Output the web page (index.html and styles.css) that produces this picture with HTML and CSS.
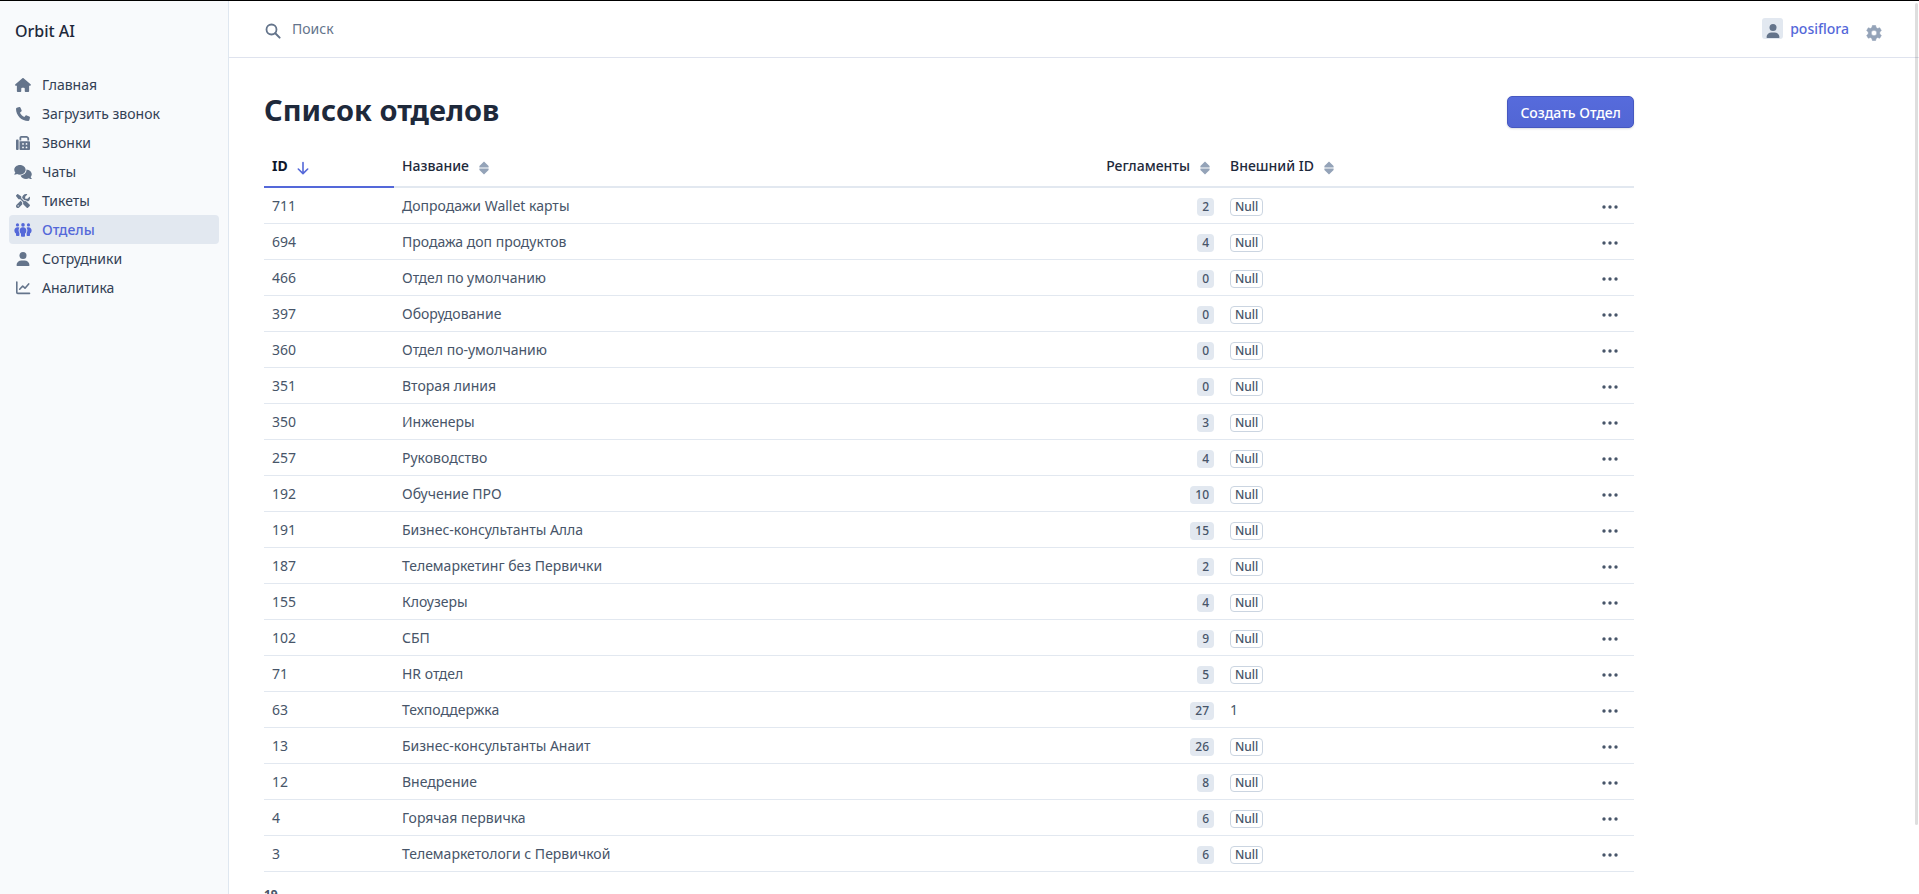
FILE: index.html
```html
<!DOCTYPE html>
<html lang="ru">
<head>
  <meta charset="UTF-8">
  <meta name="viewport" content="width=device-width, initial-scale=1.0">
  <title>Список отделов</title>
  <link rel="stylesheet" href="styles.css">
</head>
<body>
  <!-- icons -->
  <svg class="sprite" aria-hidden="true">
    <symbol id="i-house" viewBox="0 0 576 512">
      <path d="M575.800 255.500c0 18-15 32.100-32 32.100h-32l.7 160.200c0 2.700-.2 5.400-.5 8.100V472c0 22.100-17.900 40-40 40H392c-22.100 0-40-17.900-40-40v-88c0-17.700-14.300-32-32-32h-64c-17.700 0-32 14.300-32 32v88c0 22.100-17.900 40-40 40h-80c-22.100 0-40-17.900-40-40V287.600H32c-18 0-32-14-32-32.100 0-9 3-17 10-24L266.400 8c7-7 15-8 22-8s15 2 21 7l255.400 224.500c8 7 12 15 11 24"/>
    </symbol>
    <symbol id="i-phone" viewBox="0 0 512 512">
      <path d="M164.900 24.600c-7.700-18.600-28-28.500-47.400-23.200l-88 24C12.100 30.200 0 46 0 64c0 247.400 200.600 448 448 448 18 0 33.800-12.100 38.600-29.500l24-88c5.300-19.400-4.600-39.700-23.200-47.400l-96-40c-16.300-6.800-35.200-2.100-46.300 11.600L304.700 368C234.300 334.700 177.300 277.700 144 207.300l49.300-40.300c13.700-11.200 18.400-30 11.600-46.300z"/>
    </symbol>
    <symbol id="i-fax" viewBox="0 0 512 512">
      <path d="M128 64v96h64V64h194.700L416 93.300V160h64V93.300c0-17-6.700-33.300-18.700-45.300L432 18.700C420 6.700 403.700 0 386.700 0H192c-35.300 0-64 28.700-64 64M0 160v320c0 17.700 14.300 32 32 32h32c17.700 0 32-14.300 32-32V160c0-17.700-14.300-32-32-32H32c-17.700 0-32 14.300-32 32m480 32H128v288c0 17.700 14.300 32 32 32h320c17.700 0 32-14.300 32-32V224c0-17.700-14.300-32-32-32M256 256a32 32 0 1 1 0 64 32 32 0 1 1 0-64m96 32a32 32 0 1 1 64 0 32 32 0 1 1-64 0m32 96a32 32 0 1 1 0 64 32 32 0 1 1 0-64m-160 32a32 32 0 1 1 64 0 32 32 0 1 1-64 0"/>
    </symbol>
    <symbol id="i-chat" viewBox="0 0 640 512">
      <path d="M208 352c114.900 0 208-78.800 208-176S322.900 0 208 0 0 78.800 0 176c0 38.600 14.700 74.300 39.600 103.400-3.500 9.400-8.700 17.700-14.200 24.700-4.800 6.200-9.700 11-13.300 14.300-5.500 4.300-8.700 6.300-8.700 6.300C.5 327-1 334.400 1.200 340.800S9.200 352 16 352c21.800 0 43.800-5.600 62.100-12.500 9.200-3.500 17.800-7.400 25.300-11.400C134.100 343.300 169.800 352 208 352m240-176c0 112.300-99.100 196.900-216.500 207C255.800 457.400 336.400 512 432 512c38.200 0 73.900-8.700 104.700-23.900 7.500 4 16 7.900 25.200 11.400 18.300 6.900 40.300 12.500 62.100 12.500 6.900 0 13.100-4.500 15.200-11.100 2.100-6.600-.2-13.800-5.800-17.900 0 0-4-2.900-8.100-6.500-3.600-3.300-8.500-8.100-13.300-14.300-5.500-7-10.700-15.400-14.200-24.700C622.500 410.500 640 374.700 640 336c0-92.800-84.900-168.900-192.600-175.500.4 5.100.6 10.300.6 15.500"/>
    </symbol>
    <symbol id="i-tools" viewBox="0 0 512 512">
      <path d="M78.600 5C69.100-2.400 55.600-1.500 47 7L7 47c-8.500 8.500-9.400 22-2.100 31.600l80 104c4.500 5.900 11.600 9.400 19 9.400h54.100l109 109c-14.700 29-10 65.400 14.300 89.600l112 112c12.500 12.500 32.800 12.500 45.300 0l64-64c12.500-12.500 12.500-32.800 0-45.300l-112-112c-24.200-24.200-60.600-29-89.600-14.300l-109-109V104c0-7.500-3.500-14.500-9.400-19zM19.900 396.100C7.200 408.800 0 426.100 0 444.100 0 481.600 30.400 512 67.900 512c18 0 35.300-7.200 48-19.900l117.800-117.800c-7.800-20.900-9-43.600-3.600-65.100l-61.700-61.700zM512 144c0-10.500-1.100-20.700-3.200-30.500-2.400-11.200-16.100-14.100-24.200-6l-63.900 63.900c-3 3-7.100 4.700-11.300 4.700H352c-8.800 0-16-7.200-16-16v-57.500c0-4.200 1.700-8.300 4.700-11.300l63.900-63.900c8.100-8.100 5.200-21.800-6-24.200C388.700 1.100 378.500 0 368 0c-79.500 0-144 64.500-144 144v.8l85.300 85.300c36-9.100 75.800.5 104 28.700l15.700 15.700c49-23 83-72.800 83-130.500M56 432a24 24 0 1 1 48 0 24 24 0 1 1-48 0"/>
    </symbol>
    <symbol id="i-group" viewBox="0 0 18 14">
      <circle cx="3.500" cy="1.900" r="1.600"/><circle cx="9" cy="1.900" r="1.800"/><circle cx="14.500" cy="1.900" r="1.600"/>
      <path d="M3 4.200h1.400l1 .5a5 5 0 0 0 0 5.300v2.200a.8.8 0 0 1-.8.800H2.800a.8.8 0 0 1-.8-.8V10.500C-.4 9-.2 5 3 4.200M15 4.200h-1.400l-1 .5a5 5 0 0 1 0 5.300v2.200a.8.8 0 0 0 .8.800h1.800a.8.8 0 0 0 .8-.8V10.500C18.400 9 18.200 5 15 4.200M8.200 4.300h1.600c3 .8 3.300 4.800 1.200 6.400V13a.8.8 0 0 1-.8.800H7.800A.8.8 0 0 1 7 13v-2.300C4.900 9.100 5.200 5.100 8.200 4.300"/>
    </symbol>
    <symbol id="i-person" viewBox="0 0 16 16">
      <circle cx="8" cy="4.500" r="3.500"/><path d="M6.500 9.500h3a5 5 0 0 1 5 4.700.8.8 0 0 1-.8.800H2.300a.8.8 0 0 1-.8-.8 5 5 0 0 1 5-4.700"/>
    </symbol>
    <symbol id="i-chart" viewBox="0 0 16 16">
      <path d="M1.800 2v10.400a1 1 0 0 0 1 1h11.700M4.700 9.200l3-3.200 2.300 2.200 3.700-4.300" fill="none" stroke="currentColor" stroke-width="1.600" stroke-linecap="round" stroke-linejoin="round"/>
    </symbol>
    <symbol id="i-search" viewBox="0 0 16 16">
      <circle cx="6.500" cy="6.500" r="5" fill="none" stroke="currentColor" stroke-width="1.800"/><path d="m10.300 10.300 4.300 4.300" stroke="currentColor" stroke-width="2" stroke-linecap="round"/>
    </symbol>
    <symbol id="i-gear" viewBox="0.5 0 15 16">
      <path fill-rule="evenodd" stroke="currentColor" stroke-width=".6" stroke-linejoin="round" d="M6.400.5h3.200l.5 2.100 1.500.9 2.100-.7 1.600 2.800-1.600 1.400v2l1.600 1.400-1.600 2.800-2.100-.7-1.500.9-.5 2.100H6.400l-.5-2.100-1.500-.9-2.100.7-1.600-2.800L2.300 9V7L.7 5.600l1.600-2.800 2.100.7 1.500-.9zM8 5.200a2.800 2.800 0 1 0 0 5.600 2.800 2.800 0 0 0 0-5.600"/>
    </symbol>
    <symbol id="i-down" viewBox="0 0 12 14">
      <path d="M6 1.500v11M1.300 8 6 12.600 10.700 8" fill="none" stroke="currentColor" stroke-width="1.600" stroke-linecap="round" stroke-linejoin="round"/>
    </symbol>
    <symbol id="i-sort" viewBox="0 0 10 14">
      <path d="M5 .6 9.600 5v1.400H.4V5zM5 13.400.4 9V7.600h9.200V9z"/>
    </symbol>
    <symbol id="i-dots" viewBox="0 0 16 16">
      <circle cx="2" cy="8" r="1.700"/><circle cx="8" cy="8" r="1.700"/><circle cx="14" cy="8" r="1.700"/>
    </symbol>
  </svg>

  <div class="layout">
    <aside class="sidebar">
      <a class="brand" href="#">Orbit AI</a>
      <nav class="menu">
        <a href="#"><svg class="small"><use href="#i-house"/></svg>Главная</a>
        <a href="#"><svg class="small"><use href="#i-phone"/></svg>Загрузить звонок</a>
        <a href="#"><svg class="small"><use href="#i-fax"/></svg>Звонки</a>
        <a href="#"><svg class="wide"><use href="#i-chat"/></svg>Чаты</a>
        <a href="#"><svg class="small"><use href="#i-tools"/></svg>Тикеты</a>
        <a href="#" class="active"><svg class="wide"><use href="#i-group"/></svg>Отделы</a>
        <a href="#"><svg><use href="#i-person"/></svg>Сотрудники</a>
        <a href="#"><svg><use href="#i-chart"/></svg>Аналитика</a>
      </nav>
    </aside>

    <div class="main">
      <header class="topbar">
        <label class="search">
          <svg><use href="#i-search"/></svg>
          <input type="search" placeholder="Поиск" aria-label="Поиск">
        </label>
        <a class="user" href="#"><span class="avatar"><svg><use href="#i-person"/></svg></span>posiflora</a>
        <button class="settings" type="button" aria-label="Настройки"><svg><use href="#i-gear"/></svg></button>
      </header>

      <main class="content">
        <div class="heading">
          <h1>Список отделов</h1>
          <button class="create" type="button">Создать Отдел</button>
        </div>
        <table class="data">
          <thead>
            <tr>
              <th class="col-id sorted">ID<svg class="down"><use href="#i-down"/></svg></th>
              <th class="col-name">Название<svg class="sort"><use href="#i-sort"/></svg></th>
              <th class="col-rules">Регламенты<svg class="sort"><use href="#i-sort"/></svg></th>
              <th class="col-ext">Внешний ID<svg class="sort"><use href="#i-sort"/></svg></th>
              <th class="col-menu"></th>
            </tr>
          </thead>
          <tbody id="rows">
            <!-- Table rows will be inserted here -->
          </tbody>
        </table>
        <div class="total">19</div>
      </main>
    </div>
  </div>
  <div class="scroll-thumb"></div>

  <script src="script.js"></script>
</body>
</html>
```
FILE: styles.css
```css
* {
  box-sizing: border-box;
}

body {
  margin: 0;
  border-top: 1px solid #000;
  background: #fff;
  color: #475569;
  font: 14px/21px "Noto Sans", sans-serif;
  height: 100vh;
  overflow: hidden;
}

svg {
  width: 16px;
  height: 16px;
  fill: currentColor;
  flex: none;
}

.sprite {
  display: none;
}

a {
  color: inherit;
  text-decoration: none;
}

button {
  font: inherit;
  border: 0;
  padding: 0;
  background: none;
  cursor: pointer;
}

.layout {
  display: flex;
  height: 100%;
}

/* sidebar */
.sidebar {
  width: 229px;
  flex: none;
  padding: 18px 9px;
  background: #f8fafc;
  border-right: 1px solid #dfe7f0;
}

.brand {
  display: block;
  padding: 0 6px;
  font-size: 16px;
  line-height: 24px;
  font-weight: 500;
  color: #1e293b;
}

.menu {
  margin-top: 27px;
}

.menu a {
  display: flex;
  align-items: center;
  gap: 11px;
  height: 29px;
  padding: 0 6px;
  border-radius: 4px;
  color: #334155;
}

.menu svg {
  color: #64748b;
}

.menu svg.small {
  height: 14px;
}

.menu svg.wide {
  width: 18px;
  height: 14px;
  margin: 0 -1px;
}

.menu a.active {
  background: #e2e8f0;
  color: #5468d9;
  font-weight: 500;
}

.menu a.active svg {
  color: #5468d9;
}

/* header */
.main {
  flex: 1;
  min-width: 0;
}

.topbar {
  display: flex;
  align-items: center;
  height: 57px;
  padding: 0 37px 2px 36px;
  border-bottom: 1px solid #dfe3ee;
}

.search {
  display: flex;
  align-items: center;
  flex: 1;
  gap: 11px;
  color: #64748b;
}

.search svg {
  margin-top: 6px;
}

.search input {
  flex: 1;
  border: 0;
  padding: 0;
  outline: 0;
  background: none;
  font: inherit;
  color: inherit;
}

.search input::placeholder {
  color: #64748b;
}

.user {
  display: flex;
  align-items: center;
  gap: 7px;
  color: #5468d9;
  font-weight: 500;
}

.avatar {
  display: flex;
  justify-content: center;
  align-items: flex-end;
  width: 21px;
  height: 21px;
  border-radius: 3px;
  background: #e2e8f0;
  color: #64748b;
}

.settings {
  display: flex;
  margin: 10px 0 0 17px;
  color: #94a3b8;
}

/* content */
.content {
  max-width: 1440px;
  padding: 33px 35px;
}

.heading {
  display: flex;
  align-items: center;
  justify-content: space-between;
}

h1 {
  margin: 0;
  padding-bottom: 4px;
  font-size: 29px;
  line-height: 38px;
  font-weight: 700;
  color: #1e293b;
}

.create {
  height: 32px;
  padding: 0 12px;
  border: 1px solid #4658c0;
  border-radius: 5px;
  background: linear-gradient(#566bdc, #5266d4);
  box-shadow: 0 1px 2px rgba(30, 41, 59, 0.15);
  color: #fff;
  font-weight: 500;
}

/* table */
.data {
  width: 100%;
  margin-top: 11px;
  border-collapse: collapse;
  table-layout: fixed;
}

.data th {
  height: 43px;
  padding: 0 8px;
  border-bottom: 2px solid #e2e8f0;
  color: #1e293b;
  font-weight: 500;
  text-align: left;
}

.data th.sorted {
  border-color: #5468d9;
  color: #0f172a;
  font-weight: 700;
}

.data td {
  height: 36px;
  padding: 0 8px;
  border-bottom: 1px solid #e2e8f0;
}

.col-id {
  width: 130px;
}

.data .col-rules {
  width: 130px;
  text-align: right;
}

.col-ext {
  width: 300px;
}

.col-menu {
  width: 112px;
}

.data .num {
  text-align: right;
}

.data .sort {
  width: 10px;
  height: 14px;
  margin: 0 4px 0 10px;
  vertical-align: -4px;
  color: #94a3b8;
}

.data .down {
  width: 12px;
  height: 14px;
  margin-left: 9px;
  vertical-align: -4px;
  color: #5468d9;
}

.badge {
  display: inline-block;
  padding: 0 5px;
  border-radius: 4px;
  background: #e2e8f0;
  font-size: 12px;
  line-height: 18px;
  font-weight: 500;
  vertical-align: middle;
}

.badge.null {
  padding: 0 4px;
  border: 1px solid #cbd5e1;
  background: none;
  line-height: 16px;
}

.more {
  display: inline-flex;
  margin-right: 8px;
  vertical-align: middle;
  color: #475569;
}

.total {
  margin-top: 14px;
  font-size: 12px;
  line-height: 18px;
  font-weight: 700;
}

.scroll-thumb {
  position: fixed;
  top: 3px;
  right: 1px;
  width: 3px;
  height: 92%;
  border-radius: 2px;
  background: rgba(0, 0, 0, 0.13);
}
```
FILE: script.js
```js
const items = [
  [711, "Допродажи Wallet карты", 2],
  [694, "Продажа доп продуктов", 4],
  [466, "Отдел по умолчанию", 0],
  [397, "Оборудование", 0],
  [360, "Отдел по-умолчанию", 0],
  [351, "Вторая линия", 0],
  [350, "Инженеры", 3],
  [257, "Руководство", 4],
  [192, "Обучение ПРО", 10],
  [191, "Бизнес-консультанты Алла", 15],
  [187, "Телемаркетинг без Первички", 2],
  [155, "Клоузеры", 4],
  [102, "СБП", 9],
  [71, "HR отдел", 5],
  [63, "Техподдержка", 27, "1"],
  [13, "Бизнес-консультанты Анаит", 26],
  [12, "Внедрение", 8],
  [4, "Горячая первичка", 6],
  [3, "Телемаркетологи с Первичкой", 6]
];

const rows = document.getElementById("rows");

items.forEach(([id, name, rules, ext]) => {
  const tr = document.createElement("tr");
  tr.innerHTML = `
    <td>${id}</td>
    <td>${name}</td>
    <td class="num"><span class="badge">${rules}</span></td>
    <td>${ext || '<span class="badge null">Null</span>'}</td>
    <td class="num"><button class="more" type="button" aria-label="Действия"><svg><use href="#i-dots"/></svg></button></td>`;
  rows.appendChild(tr);
});
```
